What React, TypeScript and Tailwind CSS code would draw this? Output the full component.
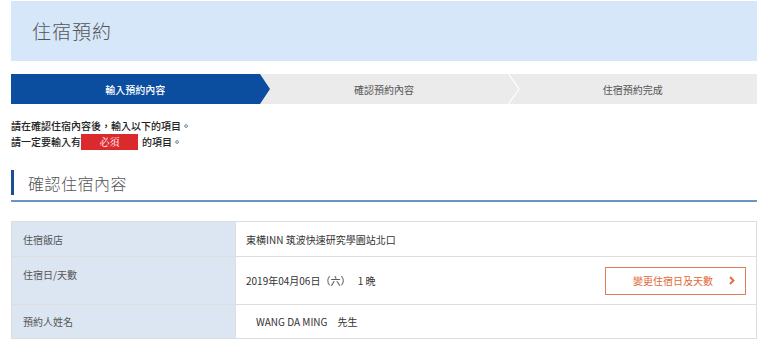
const font = { fontFamily: '"Noto Sans CJK TC", "Liberation Sans", sans-serif' };

const steps = ['輸入預約內容', '確認預約內容', '住宿預約完成'];

const rows = [
  { label: '住宿飯店', value: '東横INN 筑波快速研究學園站北口' },
  { label: '住宿日/天數', value: '2019年04月06日（六）　 1 晩', action: '變更住宿日及天數' },
  { label: '預約人姓名', value: '　WANG DA MING　先生' },
];

export default function App() {
  return (
    <div className="w-[768px] h-[343px] overflow-hidden bg-white text-[#333]" style={font}>
      <div className="mx-[11px] pt-[1px]">
        <div className="flex h-[60px] items-center bg-[#d6e7fa] pl-[21px]">
          <h1 className="text-[19px] font-light tracking-[1px] text-[#555]">住宿預約</h1>
        </div>

        <div className="mt-[13px] grid h-[30px] grid-cols-3 bg-[#ebebeb] text-[10px]">
          {steps.map((s, i) => (
            <div
              key={s}
              className={
                'relative flex items-center justify-center ' +
                (i === 0 ? 'bg-[#0b4d9e] font-medium text-white' : 'text-[#555]')
              }
            >
              {s}
              {i === 0 && (
                <svg className="absolute left-full top-0" width="10" height="30" viewBox="0 0 10 30">
                  <path d="M0 0 L10 15 L0 30 Z" fill="#0b4d9e" />
                </svg>
              )}
              {i === 1 && (
                <svg className="absolute left-full top-0" width="12" height="30" viewBox="0 0 12 30">
                  <path d="M0.5 0 L11 15 L0.5 30" fill="none" stroke="#fff" strokeWidth="1.2" />
                </svg>
              )}
            </div>
          ))}
        </div>

        <div className="mt-[14px] text-[10px] font-medium leading-[16px] text-[#222]">
          <p>請在確認住宿內容後，輸入以下的項目。</p>
          <p className="flex items-center">
            請一定要輸入有
            <span
              className="mr-[4px] inline-flex h-[16px] w-[57px] items-center justify-center bg-[#db2a2e] font-normal text-white"
              style={{ fontFamily: '"Noto Serif CJK TC", "Liberation Serif", serif' }}
            >
              必須
            </span>
            的項目。
          </p>
        </div>

        <div className="mt-[20px] border-b-2 border-[#6b93c4] pb-[5px]">
          <div className="flex h-[25px] items-center border-l-[3px] border-[#1a4f95] pl-[14px]">
            <h2 className="text-[16px] font-light tracking-[0.5px] text-[#555]">確認住宿內容</h2>
          </div>
        </div>

        <div className="mt-[19px] border border-[#dedede] text-[10px]">
          {rows.map((r, i) => (
            <div key={r.label} className={'flex ' + (i > 0 ? 'border-t border-[#dedede]' : '')}>
              <div
                className={
                  'w-[224px] shrink-0 border-r border-[#dedede] bg-[#dce6f2] pl-[11px] text-[#555] ' +
                  (r.action ? 'pt-[10px]' : 'flex items-center')
                }
              >
                {r.label}
              </div>
              <div
                className={
                  'flex flex-1 items-center justify-between pl-[10px] pr-[10px] text-[#333] ' +
                  (r.action ? 'h-[47px]' : i === 0 ? 'h-[34px]' : 'h-[33px]')
                }
              >
                <span className="whitespace-pre">{r.value}</span>
                {r.action && (
                  <button className="flex h-[28px] w-[141px] items-center justify-between border border-[#e17c55] pl-[27px] pr-[10px] text-[10px] text-[#e06c3c]">
                    <span>{r.action}</span>
                    <svg width="6" height="9" viewBox="0 0 6 9">
                      <path d="M1 1 L4.5 4.5 L1 8" fill="none" stroke="#e06c3c" strokeWidth="1.8" />
                    </svg>
                  </button>
                )}
              </div>
            </div>
          ))}
        </div>
      </div>
    </div>
  );
}
